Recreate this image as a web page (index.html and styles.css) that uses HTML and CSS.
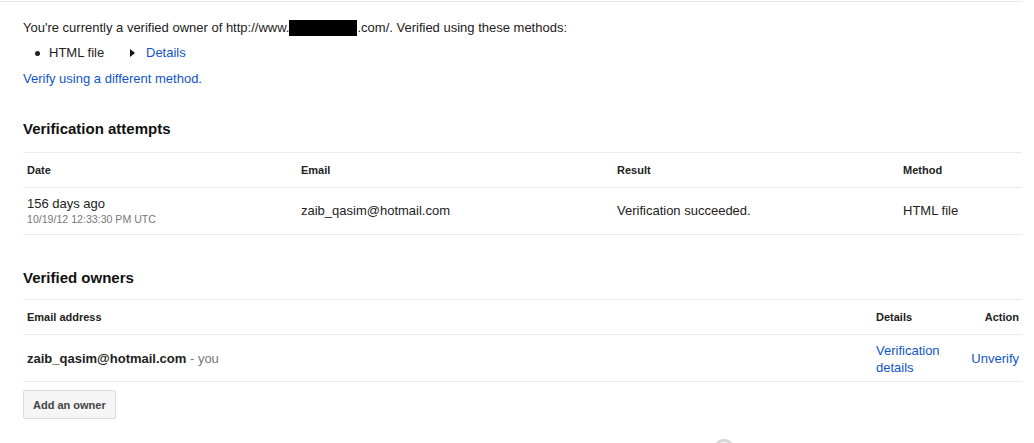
FILE: index.html
```html
<!DOCTYPE html>
<html>
<head>
<meta charset="utf-8">
<link rel="stylesheet" href="styles.css">
</head>
<body>
<div class="top-rule"></div>
<main class="page">
  <p class="status">You're currently a verified owner of http://www.<span class="redact"></span>.com/. Verified using these methods:</p>
  <ul class="methods">
    <li class="method"><span class="method-name">HTML file</span><span class="toggle"><span class="tri"></span><a class="link" href="#">Details</a></span></li>
  </ul>
  <p class="alt"><a class="link" href="#">Verify using a different method.</a></p>

  <h2 class="section-title first">Verification attempts</h2>
  <table class="grid attempts">
    <colgroup><col class="c-date"><col class="c-email"><col class="c-result"><col></colgroup>
    <thead>
      <tr><th>Date</th><th>Email</th><th>Result</th><th>Method</th></tr>
    </thead>
    <tbody>
      <tr>
        <td><div class="ago">156 days ago</div><div class="stamp">10/19/12 12:33:30 PM UTC</div></td>
        <td>zaib_qasim@hotmail.com</td>
        <td>Verification succeeded.</td>
        <td>HTML file</td>
      </tr>
    </tbody>
  </table>

  <h2 class="section-title second">Verified owners</h2>
  <table class="grid owners">
    <colgroup><col><col class="c-details"><col class="c-action"></colgroup>
    <thead>
      <tr><th>Email address</th><th>Details</th><th class="right">Action</th></tr>
    </thead>
    <tbody>
      <tr>
        <td class="low"><span class="owner">zaib_qasim@hotmail.com</span> <span class="you">- you</span></td>
        <td class="details low"><a class="link" href="#">Verification details</a></td>
        <td class="right low"><a class="link" href="#">Unverify</a></td>
      </tr>
    </tbody>
  </table>
  <button class="btn">Add an owner</button>
</main>
<div class="spinner"></div>
</body>
</html>
```
FILE: styles.css
```css
html, body {
  margin: 0;
  padding: 0;
  background: #fff;
}
body {
  font-family: "Liberation Sans", Arial, sans-serif;
  font-size: 13px;
  color: #222;
  position: relative;
  height: 443px;
  overflow: hidden;
}
.top-rule {
  margin-top: 1px;
  width: 1022px;
  height: 0;
  border-top: 1px solid #e8e8e8;
}
.page {
  padding-left: 23px;
  width: 999px;
}
.status {
  margin: 18px 0 0;
  line-height: 16px;
}
.redact {
  display: inline-block;
  width: 68px;
  height: 16px;
  background: #000;
  vertical-align: -4px;
}
.methods {
  list-style: none;
  margin: 9px 0 0;
  padding: 0;
}
.method {
  display: flex;
  align-items: center;
  line-height: 16px;
  padding-left: 12px;
}
.method::before {
  content: "";
  width: 5px;
  height: 5px;
  border-radius: 50%;
  background: #222;
  margin-right: 9px;
}
.method-name {
  width: 81px;
}
.toggle {
  display: flex;
  align-items: center;
}
.tri {
  width: 0;
  height: 0;
  border-left: 5px solid #111;
  border-top: 4px solid transparent;
  border-bottom: 4px solid transparent;
  margin-right: 11px;
}
.link {
  color: #15c;
  text-decoration: none;
}
.alt {
  margin: 10px 0 0;
  line-height: 16px;
}
.section-title {
  font-size: 15px;
  font-weight: bold;
  line-height: 18px;
  margin: 0;
  color: #111;
}
.section-title.first { margin-top: 33px; }
.section-title.second { margin-top: 34px; }
.grid {
  width: 999px;
  border-collapse: collapse;
  table-layout: fixed;
  margin-top: 14px;
}
.grid.owners {
  margin-top: 12px;
}
.grid th, .grid td {
  border-top: 1px solid #ebebeb;
  border-bottom: 1px solid #ebebeb;
  text-align: left;
  vertical-align: middle;
  padding: 0 3px 0 4px;
}
.grid th {
  font-size: 11px;
  font-weight: bold;
  height: 34px;
  color: #222;
}
.grid td {
  height: 46px;
  line-height: 16px;
}
.grid td.low {
  padding-top: 2px;
  height: 44px;
}
.c-date { width: 274px; }
.c-email { width: 316px; }
.c-result { width: 286px; }
.c-details { width: 99px; }
.c-action { width: 51px; }
.ago {
  line-height: 16px;
}
.stamp {
  font-size: 10.6px;
  line-height: 14px;
  color: #777;
}
.owner {
  font-weight: bold;
}
.you {
  color: #777;
}
.grid td.details {
  line-height: 17px;
}
.grid .right {
  text-align: right;
  padding-left: 0;
}
.btn {
  display: block;
  margin-top: 8px;
  height: 29px;
  padding: 0 9px;
  font-family: "Liberation Sans", Arial, sans-serif;
  font-size: 11px;
  font-weight: bold;
  color: #444;
  background: #f5f5f5;
  border: 1px solid #dcdcdc;
  border-radius: 2px;
}
.spinner {
  position: absolute;
  left: 713px;
  top: 439px;
  width: 16px;
  height: 16px;
  border: 3px solid #d8d8d8;
  border-radius: 50%;
}
```
